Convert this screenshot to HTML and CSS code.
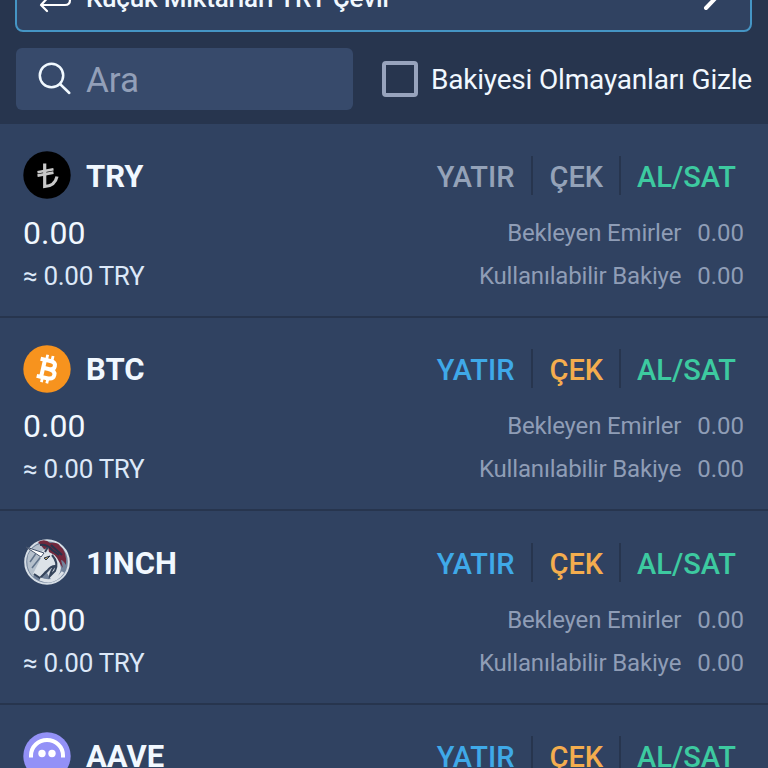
FILE: index.html
```
<!DOCTYPE html>
<html lang="tr">

<head>
    <meta charset="UTF-8">
    <meta name="viewport" content="width=device-width, initial-scale=1.0">
    <title>Cüzdan</title>
    <link rel="stylesheet" href="styles.css">
</head>

<body>

    <header class="top">
        <div class="convert">
            <svg class="convert-icon" width="34" height="36" viewBox="0 0 34 36" fill="none" stroke="#fff" stroke-width="2.2" stroke-linecap="round" stroke-linejoin="round">
                <path d="M2 12V9Q2 4 7 4H30M24 -2L30 4L24 10M31 16V20Q31 25 26 25H2M8 18.5L2 25L8 31" />
            </svg>
            <span class="convert-text">Küçük Miktarları TRY Çevir</span>
            <svg class="convert-arrow" width="20" height="34" viewBox="0 0 20 34" fill="none" stroke="#fff" stroke-width="4" stroke-linecap="round">
                <path d="M4 0L17 13.5L4 27" />
            </svg>
        </div>
        <div class="filters">
            <div class="search">
                <svg width="34" height="34" viewBox="0 0 34 34" fill="none" stroke="#f1f9ff" stroke-width="2.5" stroke-linecap="round">
                    <circle cx="13.5" cy="13.5" r="11.7" />
                    <path d="M22 22L31.3 31" />
                </svg>
                <span class="search-text">Ara</span>
            </div>
            <div class="hide-empty">
                <span class="checkbox"></span>
                <span class="hide-text">Bakiyesi Olmayanları Gizle</span>
            </div>
        </div>
    </header>

    <main class="coins">
        <section class="coin disabled">
            <div class="coin-head">
                <svg class="logo" viewBox="0 0 48 48">
                    <circle cx="24" cy="24" r="23.7" fill="#000" />
                    <g fill="none" stroke="#c9c9c9">
                        <path d="M21.7 12.5V35.5Q32 35 34 25.5" stroke-width="3.2" />
                        <path d="M14.5 21.2L30.5 18.2M14.5 24.6L30.5 21.6" stroke-width="2.6" />
                    </g>
                </svg>
                <h2 class="name">TRY</h2>
                <nav class="actions">
                    <a class="deposit">YATIR</a>
                    <a class="withdraw">ÇEK</a>
                    <a class="trade">AL/SAT</a>
                </nav>
            </div>
            <div class="line">
                <span class="amount">0.00</span>
                <span class="label">Bekleyen Emirler</span>
                <span class="value">0.00</span>
            </div>
            <div class="line">
                <span class="approx">≈ 0.00 TRY</span>
                <span class="label">Kullanılabilir Bakiye</span>
                <span class="value">0.00</span>
            </div>
        </section>

        <section class="coin">
            <div class="coin-head">
                <svg class="logo" viewBox="0 0 48 48">
                    <circle cx="24" cy="24" r="23.7" fill="#f7931e" />
                    <g transform="rotate(13 24 24)" fill="none" stroke="#fff">
                        <path d="M15.5 15.5H25.5Q31 15.5 31 19.5Q31 23.7 25.5 23.7H20M25.5 23.7Q32.5 23.7 32.5 28.3Q32.5 33 26 33H15.5M20 15.5V33" stroke-width="4" />
                        <path d="M21.5 10V15M27 10V15M21.5 33V38M27 33V38" stroke-width="2.8" />
                    </g>
                </svg>
                <h2 class="name">BTC</h2>
                <nav class="actions">
                    <a class="deposit">YATIR</a>
                    <a class="withdraw">ÇEK</a>
                    <a class="trade">AL/SAT</a>
                </nav>
            </div>
            <div class="line">
                <span class="amount">0.00</span>
                <span class="label">Bekleyen Emirler</span>
                <span class="value">0.00</span>
            </div>
            <div class="line">
                <span class="approx">≈ 0.00 TRY</span>
                <span class="label">Kullanılabilir Bakiye</span>
                <span class="value">0.00</span>
            </div>
        </section>

        <section class="coin">
            <div class="coin-head">
                <svg class="logo" viewBox="0 0 48 48">
                    <circle cx="24" cy="24" r="21.8" fill="#72839b" stroke="#d5dde5" stroke-width="2" />
                    <path d="M5 17Q9 8 17 6L25 17L14 31L10 39Q2 30 5 17Z" fill="#b5c0cc" />
                    <path d="M7 24L14 14M9 30L20 16M12 35L19 25" stroke="#61738b" stroke-width="1.5" />
                    <!-- mane -->
                    <path d="M15 4Q22 0 27 5Q35 4 37 8Q44 13 43 27Q40 22 38 22L40 30Q34 20 23 13Z" fill="#71283d" />
                    <path d="M17 7Q24 6 29 12L36 17M28 7L39 17" fill="none" stroke="#26344d" stroke-width="2" />
                    <!-- head -->
                    <path d="M3 9L18 14L25 9L26 14Q36 18 38 30Q37 39 29 43L24 35L28 31L22 33L17 40L10 36L13 30L18 20Z" fill="#dce2e8" />
                    <path d="M29 17Q36 25 32 33L27 38Q28 32 32 28Q28 28 24 33L17 40L11 36M25 9L22 14" fill="none" stroke="#34435a" stroke-width="2" />
                    <path d="M3 9L18 19L21 15Z" fill="#fff" stroke="#42516a" stroke-width="1" />
                    <path d="M21 20L27 18L23 22Z" fill="#bea763" stroke="#26344d" stroke-width="1" />
                    <path d="M17 41Q31 47 40 34" fill="none" stroke="#dce2e8" stroke-width="3" />
                </svg>
                <h2 class="name">1INCH</h2>
                <nav class="actions">
                    <a class="deposit">YATIR</a>
                    <a class="withdraw">ÇEK</a>
                    <a class="trade">AL/SAT</a>
                </nav>
            </div>
            <div class="line">
                <span class="amount">0.00</span>
                <span class="label">Bekleyen Emirler</span>
                <span class="value">0.00</span>
            </div>
            <div class="line">
                <span class="approx">≈ 0.00 TRY</span>
                <span class="label">Kullanılabilir Bakiye</span>
                <span class="value">0.00</span>
            </div>
        </section>

        <section class="coin">
            <div class="coin-head">
                <svg class="logo" viewBox="0 0 48 48">
                    <circle cx="24" cy="24" r="23.7" fill="#9391f7" />
                    <path d="M8 25.5V23.5A16 15.5 0 0 1 40 23.5V25.5" fill="none" stroke="#fff" stroke-width="4" />
                    <circle cx="19" cy="21.5" r="3.7" fill="#fff" />
                    <circle cx="29" cy="21.5" r="3.7" fill="#fff" />
                </svg>
                <h2 class="name">AAVE</h2>
                <nav class="actions">
                    <a class="deposit">YATIR</a>
                    <a class="withdraw">ÇEK</a>
                    <a class="trade">AL/SAT</a>
                </nav>
            </div>
        </section>
    </main>

</body>

</html>
```
FILE: styles.css
```
body {
    font-family: Roboto, "Liberation Sans", sans-serif;
    margin: 0;
    height: 768px;
    overflow: hidden;
    background-color: #304261;
    color: #f1f8ff;
}

.top {
    display: flow-root;
    height: 124px;
    background-color: #27354e;
    padding: 0 16px;
    box-sizing: border-box;
}

/* the page is scrolled, only the bottom of this card is visible */
.convert {
    display: flex;
    align-items: center;
    height: 69px;
    margin: -37px 0 0 -1px;
    padding: 0 28px 0 22px;
    box-sizing: border-box;
    border: 2px solid #4595c4;
    border-radius: 8px;
    background-color: #304261;
}

.convert-text {
    flex: 1;
    margin-left: 13px;
    font-size: 26px;
    font-weight: 500;
    letter-spacing: -0.15px;
    white-space: nowrap;
}

.filters {
    display: flex;
    align-items: center;
    justify-content: space-between;
    margin-top: 16px;
}

.search {
    display: flex;
    align-items: center;
    width: 337px;
    height: 62px;
    padding-left: 22px;
    box-sizing: border-box;
    border-radius: 6px;
    background-color: #374a6b;
}

.search-text {
    margin-left: 14px;
    padding-top: 2px;
    font-size: 35px;
    color: #929fb8;
}

.hide-empty {
    display: flex;
    align-items: center;
}

.checkbox {
    width: 36px;
    height: 36px;
    box-sizing: border-box;
    border: 4px solid #97a3bc;
    border-radius: 4px;
}

.hide-text {
    margin-left: 13px;
    font-size: 28px;
    letter-spacing: -0.19px;
    white-space: nowrap;
}

.coin {
    height: 193.5px;
    padding: 27px 24px 0 23px;
    box-sizing: border-box;
    border-bottom: 2px solid #27354e;
}

.coin-head {
    display: flex;
    align-items: center;
    height: 48px;
    margin-bottom: 12px;
}

.logo {
    width: 48px;
    height: 48px;
}

.name {
    flex: 1;
    margin: 0 0 0 15px;
    padding-top: 2px;
    font-size: 31px;
    font-weight: 700;
}

.actions {
    display: flex;
    margin-right: 8px;
    font-size: 29px;
    font-weight: 500;
}

.actions a {
    line-height: 36px;
    padding: 3px 16px 0;
    border-right: 2px solid #27354e;
}

.actions .deposit {
    padding-right: 17px;
}

.actions .trade {
    padding-right: 0;
    border-right: none;
}

.deposit {
    color: #3fa9e8;
}

.withdraw {
    color: #f4ad4e;
}

.trade {
    color: #3dcaa0;
}

.disabled .deposit,
.disabled .withdraw {
    color: #94a2b8;
}

.line {
    display: flex;
    align-items: center;
    height: 43px;
}

.amount,
.approx {
    flex: 1;
}

.amount {
    font-size: 32px;
}

.approx {
    font-size: 26px;
    letter-spacing: -0.3px;
    color: #dce8f8;
}

.label,
.value {
    font-size: 24px;
    color: #8f9db6;
}

.label {
    letter-spacing: -0.17px;
}

.value {
    margin-left: 16px;
}
```
